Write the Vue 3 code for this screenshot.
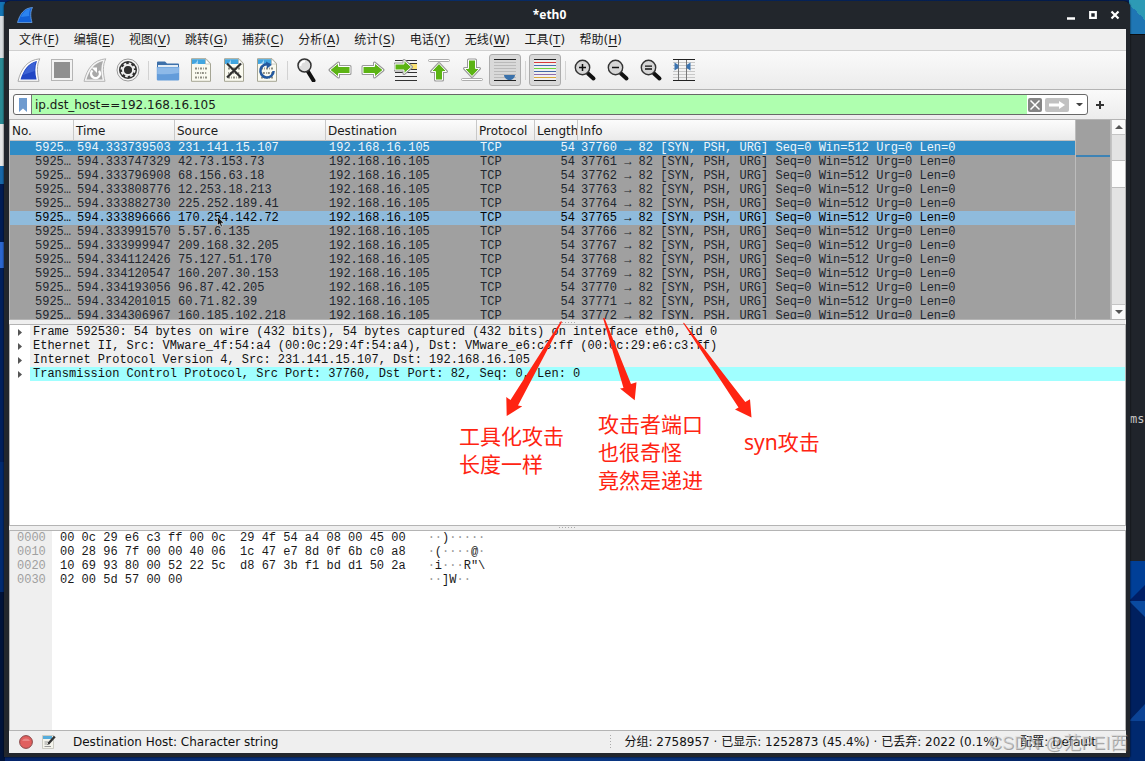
<script setup>
import { ref } from 'vue'

const filter = ref('ip.dst_host==192.168.16.105')

const menus = [
  ['文件', 'F'], ['编辑', 'E'], ['视图', 'V'], ['跳转', 'G'], ['捕获', 'C'], ['分析', 'A'],
  ['统计', 'S'], ['电话', 'Y'], ['无线', 'W'], ['工具', 'T'], ['帮助', 'H'],
]

const tools = [
  'start', 'stop', 'restart', 'options', '|', 'open', 'save', 'close', 'reload', '|',
  'find', 'back', 'forward', 'goto', 'first', 'last', 'autoscroll', '|', 'colorize', '|',
  'zoomin', 'zoomout', 'zoomreset', 'columns',
]
const pressed = ['autoscroll', 'colorize']

const packets = [
  ['594.333739503', '231.141.15.107'],
  ['594.333747329', '42.73.153.73'],
  ['594.333796908', '68.156.63.18'],
  ['594.333808776', '12.253.18.213'],
  ['594.333882730', '225.252.189.41'],
  ['594.333896666', '170.254.142.72'],
  ['594.333991570', '5.57.6.135'],
  ['594.333999947', '209.168.32.205'],
  ['594.334112426', '75.127.51.170'],
  ['594.334120547', '160.207.30.153'],
  ['594.334193056', '96.87.42.205'],
  ['594.334201015', '60.71.82.39'],
  ['594.334306967', '160.185.102.218'],
].map(([time, source], i) => ({
  time,
  source,
  info: `${37760 + i} → 82 [SYN, PSH, URG] Seq=0 Win=512 Urg=0 Len=0`,
}))

const details = [
  'Frame 592530: 54 bytes on wire (432 bits), 54 bytes captured (432 bits) on interface eth0, id 0',
  'Ethernet II, Src: VMware_4f:54:a4 (00:0c:29:4f:54:a4), Dst: VMware_e6:c3:ff (00:0c:29:e6:c3:ff)',
  'Internet Protocol Version 4, Src: 231.141.15.107, Dst: 192.168.16.105',
  'Transmission Control Protocol, Src Port: 37760, Dst Port: 82, Seq: 0, Len: 0',
]

const bytes = [
  ['0000', '00 0c 29 e6 c3 ff 00 0c  29 4f 54 a4 08 00 45 00', '··)·····'],
  ['0010', '00 28 96 7f 00 00 40 06  1c 47 e7 8d 0f 6b c0 a8', '·(····@·'],
  ['0020', '10 69 93 80 00 52 22 5c  d8 67 3b f1 bd d1 50 2a', '·i···R"\\'],
  ['0030', '02 00 5d 57 00 00', '··]W··'],
].map(([offset, hex, ascii]) => ({ offset, hex, ascii: ascii.split('') }))
</script>

<template>
  <div class="desktop">
    <div class="behind-left" aria-hidden="true"></div>
    <div class="behind-right" aria-hidden="true">
      <div class="wall-top"></div>
      <div class="terminal"><span>ms</span></div>
      <svg class="wall-low" viewBox="0 0 15 200" preserveAspectRatio="none">
        <rect width="15" height="200" fill="#00205f" />
        <rect width="15" height="40" fill="#003f97" />
        <path d="M0 40 15 24V40z" fill="#001f66" />
        <path d="M0 40H15V56z" fill="#0a4aa0" />
        <path d="M0 160 15 143V160z" fill="#0b4396" />
        <path d="M0 160H15V200H0z" fill="#00296f" />
      </svg>
    </div>

    <main class="window">
      <header class="titlebar">
        <svg class="app-icon" viewBox="0 0 16 16">
          <path d="M0.5 15.5C3 7 7 1 15.500.5C13 5 13.500 10 15 15.500z" fill="#1261d8" stroke="#6fa5e0" stroke-width="0.8" />
          <path d="M4 10C6 5 9 2.500 13.500 1.500C12 4 12 7 12.200 9z" fill="#2b83f0" />
        </svg>
        <h1>*eth0</h1>
        <div class="win-buttons">
          <button aria-label="Minimize"><svg viewBox="0 0 10 10"><path d="M1 8.500H9" stroke="#fff" stroke-width="2.500" /></svg></button>
          <button aria-label="Maximize"><svg viewBox="0 0 10 10"><path d="M2.200 2.200H7.800V7.800H2.200z" fill="none" stroke="#fff" stroke-width="2.200" /></svg></button>
          <button aria-label="Close"><svg viewBox="0 0 10 10"><path d="M1.500 1.500 8.500 8.500M8.500 1.500 1.500 8.500" stroke="#fff" stroke-width="2.200" /></svg></button>
        </div>
      </header>

      <nav class="menubar">
        <div class="menus">
          <button v-for="m in menus" :key="m[1]">{{ m[0] }}(<u>{{ m[1] }}</u>)</button>
        </div>
      </nav>

      <div class="toolbar">
        <template v-for="(t, i) in tools" :key="i">
          <span v-if="t === '|'" class="sep"></span>
          <button v-else :class="{ pressed: pressed.includes(t) }" :aria-label="t">
            <svg viewBox="0 0 24 24">
              <template v-if="t === 'start'">
                <path d="M1 23.300C4 11 10 2 22.800.8C19.500 7 20 15 22 23.300z" fill="#fff" stroke="#a9a9a9" />
                <path d="M3.500 21.500C6.500 12 11 5 20 3C17.700 9 18 15 19.600 21.500z" fill="#2146c4" />
                <path d="M6 17C9 10 13 5.500 19 3.500C17.500 7 17.300 11 17.700 13z" fill="#3c62d4" />
              </template>
              <template v-else-if="t === 'stop'">
                <rect x="1.500" y="1.500" width="21" height="21" fill="#f3f3f3" stroke="#b5b5b5" />
                <rect x="4" y="4" width="16" height="16" fill="#8f8f8f" />
              </template>
              <template v-else-if="t === 'restart'">
                <path d="M1 23.300C4 11 10 2 22.800.8C19.500 7 20 15 22 23.300z" fill="#f5f5f5" stroke="#b5b5b5" />
                <path d="M3.500 21.500C6.500 12 11 5 20 3C17.700 9 18 15 19.600 21.500z" fill="#a9a9a9" />
                <path d="M9.500 12.500A4.400 4.400 0 1 0 16 13" fill="none" stroke="#fff" stroke-width="2.400" />
                <path d="M8.500 9.500H14V15z" fill="#fff" />
              </template>
              <template v-else-if="t === 'options'">
                <circle cx="12" cy="12" r="11" fill="#f4f4f4" stroke="#9b9b9b" />
                <circle cx="12" cy="12" r="9" fill="#303030" />
                <circle cx="12" cy="12" r="5" fill="none" stroke="#f1f1f1" stroke-width="2" />
                <circle cx="12" cy="12" r="6.500" fill="none" stroke="#f1f1f1" stroke-width="2" stroke-dasharray="2.600 2.500" />
                <circle cx="12" cy="12" r="3.600" fill="#303030" />
              </template>
              <template v-else-if="t === 'open'">
                <path d="M1 9V4.500Q1 3.500 2 3.500H9L11 5.500H22Q23 5.500 23 6.500V9z" fill="#3d70aa" />
                <path d="M2 7H22V10H2z" fill="#e4edf5" />
                <path d="M.8 9H23.200V21.500Q23.200 22.500 22 22.500H2Q.8 22.500.8 21.500z" fill="#639cda" />
                <path d="M1.200 9.400H22.800V15Q12 17 1.200 16z" fill="#8db9e8" />
              </template>
              <template v-else-if="t === 'save' || t === 'close' || t === 'reload'">
                <path d="M2.500.7H17L21.500 5.500V23.300H2.500z" fill="#fafaf0" stroke="#a5a594" />
                <path d="M3 1.200H17V6H3z" fill="#41a5e0" />
                <path d="M3 6Q7 6 9 1.500V6z" fill="#9dd2f1" />
                <path d="M16.500 1V6H21.500z" fill="#fff" stroke="#b4b4a5" stroke-width=".6" />
                <g fill="none" stroke="#8d8d82" stroke-width="2">
                  <path d="M6 10.500H18" stroke-dasharray="2 1 .8 1.200" />
                  <path d="M6 15H18" stroke-dasharray=".8 1 2 1.200" />
                  <path d="M6 19.500H18" stroke-dasharray="2 1 .8 1.200" />
                </g>
                <path v-if="t === 'close'" d="M5 5.500 19 19.500M19 5.500 5 19.500" stroke="#303030" stroke-width="2.200" />
                <template v-if="t === 'reload'">
                  <path d="M14.500 6.800A6.600 6.600 0 1 0 18.600 13" fill="none" stroke="#23599f" stroke-width="2.500" />
                  <path d="M11 3.500 17 6.800 12 10.500z" fill="#23599f" />
                </template>
              </template>
              <template v-else-if="t === 'find'">
                <path d="M13 13.500 18.500 22.500" stroke="#111" stroke-width="4" stroke-linecap="round" />
                <circle cx="9.500" cy="7.500" r="6.500" fill="#dedede" stroke="#333" stroke-width="1.500" />
                <path d="M5.500 8A4 4 0 0 1 10 3.500" fill="none" stroke="#fff" stroke-width="2" />
              </template>
              <g v-else-if="t === 'back'" class="arrow">
                <path d="M2 12 10.500 5V8.500H22V15.500H10.500V19z" /><path d="M2 12 10.500 5V8.500H22V15.500H10.500V19z" />
              </g>
              <g v-else-if="t === 'forward'" class="arrow">
                <path d="M22 12 13.500 5V8.500H2V15.500H13.500V19z" /><path d="M22 12 13.500 5V8.500H2V15.500H13.500V19z" />
              </g>
              <template v-else-if="t === 'goto'">
                <rect x="15" y="6" width="8" height="5" fill="#fbe273" />
                <path d="M1 2.500H23M1 5.500H23M1 14.500H23M1 18.500H23M1 22.500H23" stroke="#333" />
                <path d="M14 11.500H23" stroke="#333" />
                <g class="arrow">
                  <path d="M17.500 9 10 2.500V6H1V12H10V15.500z" /><path d="M17.500 9 10 2.500V6H1V12H10V15.500z" />
                </g>
              </template>
              <template v-else-if="t === 'first'">
                <rect x="1.500" y="1.500" width="21" height="2" rx="1" fill="#fff" stroke="#999" stroke-width=".8" />
                <g class="arrow">
                  <path d="M12 5.500 19.500 13.500H15.500V22H8.500V13.500H4.500z" /><path d="M12 5.500 19.500 13.500H15.500V22H8.500V13.500H4.500z" />
                </g>
              </template>
              <template v-else-if="t === 'last'">
                <rect x="1.500" y="20.500" width="21" height="2" rx="1" fill="#fff" stroke="#999" stroke-width=".8" />
                <g class="arrow">
                  <path d="M12 18.500 19.500 10.500H15.500V2H8.500V10.500H4.500z" /><path d="M12 18.500 19.500 10.500H15.500V2H8.500V10.500H4.500z" />
                </g>
              </template>
              <template v-else-if="t === 'autoscroll'">
                <path d="M1 1.500H23M1 22.500H23" stroke="#222" />
                <path d="M1 4.500H23M1 7.500H23M1 10.500H23M1 13.500H23M1 16.500H23M1 19.500H23" stroke="#bababa" />
                <path d="M11 17H22Q22 20 18 22H15Q11 20 11 17z" fill="#3b72ab" />
              </template>
              <g v-else-if="t === 'colorize'">
                <path d="M1 2H23V22H1z" fill="#f0f0f0" />
                <path d="M1 1.500H23M1 22.500H23" stroke="#222" />
                <path d="M1 4.500H23" stroke="#d83a3a" />
                <path d="M1 7.500H23" stroke="#456fb0" />
                <path d="M1 10.500H23" stroke="#6ed33f" />
                <path d="M1 13.500H23" stroke="#4468a8" />
                <path d="M1 16.500H23" stroke="#8d6bab" />
                <path d="M1 19.500H23" stroke="#d8a63b" />
              </g>
              <template v-else-if="t === 'columns'">
                <path d="M1 1.500H23M1 22.500H23" stroke="#222" />
                <path d="M1 4.500H23M1 7.500H23M1 10.500H23M1 13.500H23M1 16.500H23M1 19.500H23" stroke="#c8c8c8" />
                <path d="M6.500 2V22M14.500 2V22" stroke="#777" />
                <path d="M2.500 4.500 6.500 7V10L2.500 12.500zM18.500 4.500 14.500 7V10L18.500 12.500z" fill="#3c74b0" />
              </template>
              <template v-else>
                <path d="M15 15.500 20.500 20.500" stroke="#111" stroke-width="4" stroke-linecap="round" />
                <circle cx="9.500" cy="9.500" r="7.200" fill="#d6d6d6" stroke="#333" stroke-width="1.400" />
                <path v-if="t === 'zoomin'" d="M6 9.500H13M9.500 6V13" stroke="#111" stroke-width="1.500" />
                <path v-else-if="t === 'zoomout'" d="M6 9.500H13" stroke="#111" stroke-width="1.500" />
                <path v-else d="M6 8.200H13M6 11H13" stroke="#111" stroke-width="1.300" />
              </template>
            </svg>
          </button>
        </template>
      </div>

      <div class="filterbar">
        <div class="filter">
          <button class="bookmark" aria-label="Bookmarks"><svg viewBox="0 0 8 14"><path d="M0 0H8V14L4 10.500 0 14z" fill="#6f9bcf" /></svg></button>
          <input v-model="filter" type="text" aria-label="Display filter" spellcheck="false" />
          <button class="clear" aria-label="Clear"><svg viewBox="0 0 14 14"><path d="M2.500 2.500 11.500 11.500M11.500 2.500 2.500 11.500" stroke="#fff" stroke-width="1.500" /></svg></button>
          <button class="apply" aria-label="Apply"><svg viewBox="0 0 24 14"><path d="M4 5.500H14V3L20 7 14 11V8.500H4z" fill="#fff" /></svg></button>
          <button class="drop" aria-label="History"><svg viewBox="0 0 8 4"><path d="M0 0H8L4 4z" fill="#444" /></svg></button>
        </div>
        <button class="plus" aria-label="Add"><svg viewBox="0 0 8 8"><path d="M4 0V8M0 4H8" stroke="#333" stroke-width="2" /></svg></button>
      </div>

      <section class="pane packets">
        <div class="table-wrap">
          <table>
            <colgroup>
              <col class="c-no" /><col class="c-time" /><col class="c-src" /><col class="c-dst" />
              <col class="c-proto" /><col class="c-len" /><col />
            </colgroup>
            <thead>
              <tr><th>No.</th><th>Time</th><th>Source</th><th>Destination</th><th>Protocol</th><th>Length</th><th>Info</th></tr>
            </thead>
            <tbody>
              <tr v-for="(p, i) in packets" :key="i" :class="{ selected: i === 0, hover: i === 5 }">
                <td class="right">5925…</td>
                <td>{{ p.time }}</td>
                <td>{{ p.source }}</td>
                <td>192.168.16.105</td>
                <td>TCP</td>
                <td class="right">54</td>
                <td>{{ p.info }}</td>
              </tr>
            </tbody>
          </table>
        </div>
        <div class="minimap"></div>
        <div class="scrollbar">
          <button aria-label="Scroll up"><svg viewBox="0 0 8 4"><path d="M0 4H8L4 0z" fill="#555" /></svg></button>
          <div class="track"><div class="thumb"></div></div>
          <button aria-label="Scroll down"><svg viewBox="0 0 8 4"><path d="M0 0H8L4 4z" fill="#555" /></svg></button>
        </div>
        <svg class="cursor" viewBox="0 0 8 12"><path d="M.5.5V9.500L2.500 7.800 4 11 5.500 10.300 4.200 7.200H7z" fill="#111" stroke="#eee" stroke-width=".6" /></svg>
      </section>

      <div class="splitter"></div>

      <section class="pane details">
        <ul>
          <li v-for="(d, i) in details" :key="i">
            <svg viewBox="0 0 4 7"><path d="M0 0 4 3.500 0 7z" fill="#555" /></svg>
            <span :class="{ current: i === 3 }">{{ d }}</span>
          </li>
        </ul>
      </section>

      <div class="splitter"></div>

      <section class="pane bytes">
        <div class="offsets"><div v-for="b in bytes" :key="b.offset">{{ b.offset }}</div></div>
        <div class="hex"><div v-for="b in bytes" :key="b.offset">{{ b.hex }}</div></div>
        <div class="ascii">
          <div v-for="b in bytes" :key="b.offset"><span v-for="(c, i) in b.ascii" :key="i" :class="{ dot: c === '·' }">{{ c }}</span></div>
        </div>
      </section>

      <footer class="statusbar">
        <button aria-label="Expert information"><svg viewBox="0 0 14 14"><circle cx="7" cy="7" r="6.400" fill="#e0605f" stroke="#7d4040" stroke-width=".9" /><path d="M3 6A4.500 4.500 0 0 1 11 6z" fill="#e98786" /></svg></button>
        <button aria-label="Comments"><svg viewBox="0 0 14 14"><path d="M.5.500H11.500V13.500H.5z" fill="#f4f4ec" stroke="#bcbcb2" stroke-width=".7" /><path d="M1 1H10V4H1z" fill="#55acdc" /><path d="M2.500 7H6M2.500 9H5M2.500 11.500H9" stroke="#999" /><path d="M12.800 1.500 6.500 8.500" stroke="#333" stroke-width="2.400" /><path d="M6.500 7.500 5 10 8 9z" fill="#333" /></svg></button>
        <span class="field">Destination Host: Character string</span>
        <span class="grip"></span>
        <span class="counts">分组: 2758957 · 已显示: 1252873 (45.4%) · 已丢弃: 2022 (0.1%)</span>
        <span class="profile">配置: Default</span>
      </footer>
    </main>

    <div class="notes">
      <svg viewBox="0 0 1145 761">
        <g fill="#ff2412">
          <path d="M561 321 562 322 518 405.500 522.300 406.200 506.700 416 506.300 397 510.500 400z" />
          <path d="M603 318 604.500 318 631 384 636.500 382.300 634.700 400.300 620 388.500 623.500 388z" />
          <path d="M683 323 684 322.700 745.300 402 750 399.300 751.500 417.500 735 409.500 738.500 407.500z" />
        </g>
      </svg>
      <p class="note-length">工具化攻击<br />长度一样</p>
      <p class="note-port">攻击者端口<br />也很奇怪<br />竟然是递进</p>
      <p class="note-syn">syn攻击</p>
      <p class="watermark">CSDN @范PEI西</p>
    </div>
  </div>
</template>

<style>
html,
body {
  margin: 0;
  overflow: hidden;
}
</style>

<style scoped>
* {
  box-sizing: border-box;
}

.desktop {
  position: relative;
  display: flex;
  height: 100vh;
  padding: 1px 15px 4px 4px;
  overflow: hidden;
  background: linear-gradient(90deg, #05246a, #0b3c8c 40%, #04215f);
  font: 12px/14px "DejaVu Sans", "Noto Sans CJK SC", sans-serif;
  color: #1a1a1a;
}

.behind-left {
  position: absolute;
  inset: 2px auto 0 0;
  width: 5px;
  background: linear-gradient(#1474b4 0 14px, #d9dde0 14px 56px, #2a8a94 56px 122px, #e6e6e6 122px 164px, #1767a8 164px 182px, #001c55 182px 240px, #2b66cf 240px 266px, #001f5c 266px 460px, #002a70 460px 590px, #00133a 590px);
}

.behind-right {
  position: absolute;
  inset: 0 0 0 auto;
  width: 16px;
  display: flex;
  flex-direction: column;
}

.wall-top {
  height: 34px;
  background: linear-gradient(45deg, #1f76b4 60%, #2d9ab5 60%);
}

.terminal {
  flex: 1;
  display: flex;
  align-items: center;
  padding: 242px 0 0 1px;
  border-top: 1px solid #0c0e11;
  background: #20242b;
  color: #c8c8c8;
  font-family: "DejaVu Sans Mono", monospace;
}

.wall-low {
  width: 100%;
  height: 200px;
}

.window {
  position: relative;
  flex: 1;
  min-width: 0;
  display: flex;
  flex-direction: column;
  padding: 0 4px 4px 5px;
  border-radius: 6px 6px 0 0;
  background: #22262c;
  box-shadow: 0 0 2px #000;
}

button {
  display: flex;
  align-items: center;
  justify-content: center;
  padding: 0;
  border: 0;
  background: none;
  color: inherit;
  font: inherit;
}

.titlebar {
  display: flex;
  align-items: center;
  justify-content: space-between;
  height: 28px;
  padding: 0 6px 0 8px;
  color: #fff;
}

.app-icon {
  width: 16px;
  height: 16px;
}

h1 {
  margin: 0;
  font: bold 12px/14px "Noto Sans", sans-serif;
}

.win-buttons {
  display: flex;
  justify-content: flex-end;
  gap: 12px;
}

.win-buttons svg {
  width: 10px;
  height: 10px;
}

.menubar {
  height: 22px;
  padding-left: 3px;
  border-bottom: 1px solid #d0d0d0;
  background: #efefef;
}

.menus {
  display: flex;
  justify-content: space-between;
  width: 617px;
  height: 100%;
}

.menubar button {
  padding: 0 7px;
  white-space: nowrap;
}

u {
  text-underline-offset: 2px;
}

.toolbar {
  display: flex;
  align-items: center;
  height: 39px;
  padding-left: 4px;
  border-bottom: 1px solid #b4b4b4;
  background: linear-gradient(#fafafa, #ececec);
}

.toolbar button {
  width: 32px;
  height: 32px;
  margin-right: 1px;
  border-radius: 3px;
}

.toolbar .pressed {
  border: 1px solid #adadad;
  background: #d9d9d9;
}

.toolbar svg {
  flex: none;
  width: 24px;
  height: 24px;
}

.arrow path {
  fill: #999;
  stroke: #999;
  stroke-width: 3;
  stroke-linejoin: round;
}

.arrow path + path {
  fill: #5cb414;
  stroke: #fff;
  stroke-width: 1;
}

.sep {
  width: 1px;
  height: 19px;
  margin: 0 3px;
  background: #d2d2d2;
}

.filterbar {
  display: flex;
  align-items: center;
  height: 29px;
  padding: 0 22px 0 4px;
  background: linear-gradient(#fafafa, #ececec);
}

.filter {
  flex: 1;
  display: flex;
  align-items: center;
  height: 21px;
  border: 1px solid #686868;
  border-radius: 3px;
  background: #fff;
  overflow: hidden;
}

.bookmark {
  width: 18px;
  height: 19px;
  border-right: 1px solid #777;
}

.bookmark svg {
  width: 8px;
  height: 14px;
}

.filter input {
  flex: 1;
  min-width: 0;
  height: 19px;
  padding: 0 3px;
  border: 0;
  outline: 0;
  background: #afffaf;
  color: #1a1a1a;
  font: inherit;
}

.clear {
  width: 14px;
  height: 14px;
  margin: 0 3px 0 1px;
  border-radius: 2px;
  background: #858585;
}

.clear svg {
  width: 14px;
}

.apply {
  width: 24px;
  height: 14px;
  border-radius: 2px;
  background: #c1c1c1;
}

.apply svg {
  width: 24px;
}

.drop {
  width: 18px;
  padding-left: 3px;
}

.drop svg {
  width: 7px;
}

.plus {
  margin-left: 8px;
}

.plus svg {
  width: 8px;
}

.pane {
  flex: 1 1 0;
  min-height: 0;
  display: flex;
  border: 1px solid #b4b4b4;
  background: #fff;
  font-family: "Liberation Mono", monospace;
  overflow: hidden;
}

.packets {
  position: relative;
  background: #a0a0a0;
}

.table-wrap {
  flex: 1;
  min-width: 0;
  overflow: hidden;
}

table {
  width: 100%;
  table-layout: fixed;
  border-collapse: separate;
  border-spacing: 0;
}

.c-no { width: 64px; }
.c-time { width: 101px; }
.c-src { width: 151px; }
.c-dst { width: 151px; }
.c-proto { width: 58px; }
.c-len { width: 43px; }

th {
  height: 21px;
  padding: 1px 0 0 2px;
  border-right: 1px solid #c8c8c8;
  border-bottom: 1px solid #c0c0c0;
  background: linear-gradient(#fcfcfc, #ebebeb);
  font: 12px/14px "DejaVu Sans", sans-serif;
  text-align: left;
  white-space: nowrap;
  overflow: hidden;
}

th:last-child {
  border-right: 0;
}

td {
  height: 14px;
  padding: 0 3px;
  color: #20262e;
  white-space: nowrap;
  overflow: hidden;
}

.right {
  text-align: right;
}

.selected {
  background: #308cc6;
}

.selected td {
  color: #eef6fb;
}

.hover {
  background: #8fbbdc;
}

.hover td {
  color: #050505;
}

.minimap {
  width: 36px;
  border: solid #bcbcbc;
  border-width: 0 1px;
  background: linear-gradient(#a0a0a0 35px, #3d83b5 35px 37px, #a0a0a0 37px);
}

.scrollbar {
  display: flex;
  flex-direction: column;
  width: 14px;
  border-left: 1px solid #c4c4c4;
  background: #fafafa;
}

.scrollbar button {
  height: 14px;
}

.scrollbar svg {
  width: 8px;
}

.track {
  flex: 1;
  padding-top: 25px;
  border: solid #c4c4c4;
  border-width: 1px 0;
  background: #e3e3e3;
}

.thumb {
  height: 28px;
  border: solid #bdbdbd;
  border-width: 1px 0;
  background: #fcfcfc;
}

.cursor {
  position: absolute;
  top: 96px;
  left: 207px;
  width: 8px;
  height: 12px;
}

.splitter {
  display: flex;
  justify-content: center;
  align-items: center;
  height: 4px;
  background: #efefef;
}

.splitter::after {
  content: "";
  width: 17px;
  height: 1px;
  background: repeating-linear-gradient(90deg, #aaa 0 1px, #efefef 1px 3px);
}

ul {
  flex: 1;
  margin: 0;
  padding: 0;
  list-style: none;
}

li {
  display: flex;
  align-items: center;
  height: 14px;
}

li svg {
  width: 4px;
  height: 7px;
  margin: 0 8px;
}

li span {
  flex: 1;
  padding-left: 3px;
  background: #efefef;
  color: #111;
  white-space: nowrap;
}

li .current {
  background: #a0ffff;
}

.bytes {
  white-space: pre;
}

.offsets {
  width: 42px;
  padding-left: 7px;
  background: #efefef;
  color: #a0a0a0;
}

.hex {
  padding-left: 8px;
}

.ascii {
  padding-left: 22px;
}

.dot {
  color: #999;
}

.statusbar {
  display: flex;
  align-items: center;
  height: 22px;
  padding: 0 30px 0 10px;
  background: #efefef;
  color: #111;
  white-space: nowrap;
}

.statusbar button {
  margin-right: 9px;
}

.statusbar svg {
  width: 14px;
  height: 14px;
}

.field {
  margin-left: 8px;
}

.grip {
  width: 1px;
  height: 14px;
  margin-left: auto;
  background: repeating-linear-gradient(#aaa 0 1px, #efefef 1px 3px);
}

.counts {
  margin: 0 21px 0 13px;
}

.notes {
  position: absolute;
  inset: 0;
  pointer-events: none;
  color: #ff2412;
  font: 21px/28px "Noto Sans", "Noto Sans CJK SC", sans-serif;
}

.notes svg {
  position: absolute;
  top: 0;
  left: 0;
  width: 1145px;
  height: 761px;
}

.notes p {
  position: absolute;
  margin: 0;
  white-space: nowrap;
}

.notes .note-length {
  top: 422px;
  left: 459px;
}

.notes .note-port {
  top: 410px;
  left: 598px;
}

.notes .note-syn {
  top: 428px;
  left: 744px;
}

.notes .watermark {
  right: 17px;
  bottom: 4px;
  color: rgba(215, 215, 215, 0.5);
  font: 18px/28px "Liberation Sans", "Noto Sans CJK SC", sans-serif;
  text-shadow: 1px 1px 0 rgba(90, 90, 90, 0.5);
}
</style>
